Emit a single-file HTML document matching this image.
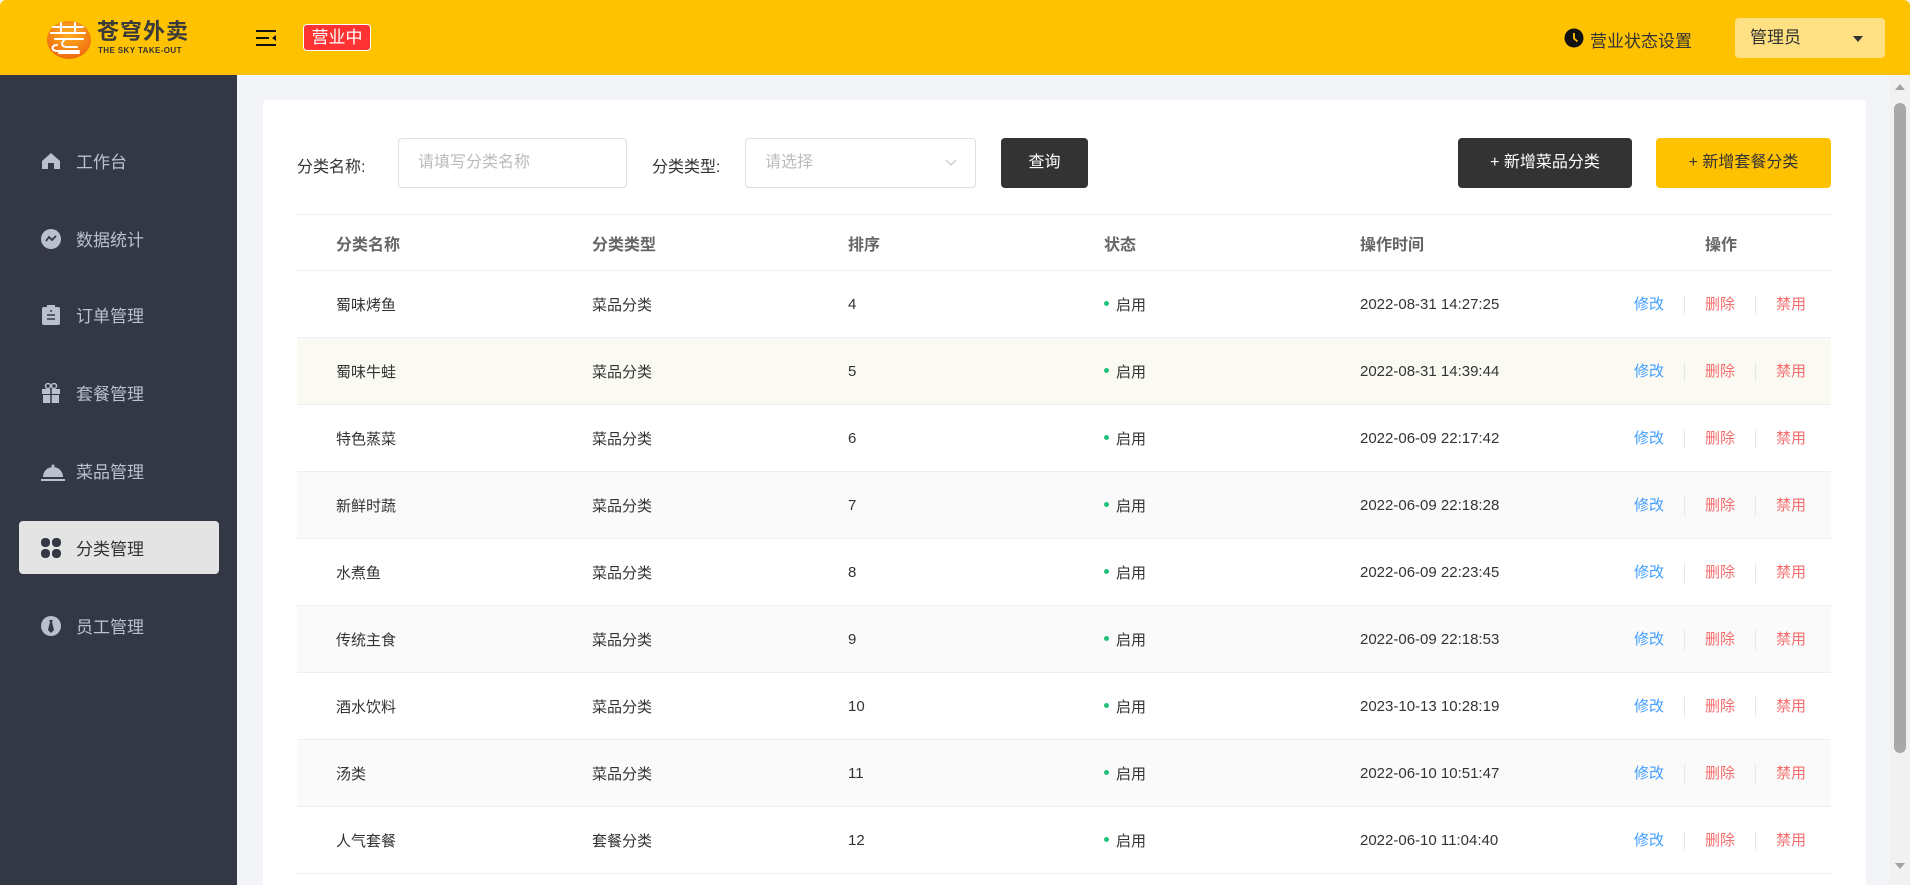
<!DOCTYPE html>
<html><head><meta charset="utf-8">
<style>
*{margin:0;padding:0;box-sizing:border-box}
html,body{width:1910px;height:885px;overflow:hidden}
body{background:#f3f4f7;font-family:"Liberation Sans","Noto Sans CJK SC",sans-serif;color:#333;position:relative}
.hdr{position:absolute;left:0;top:0;width:1910px;height:75px;background:#ffc200;border-radius:6px 6px 0 0}
.side{position:absolute;left:0;top:75px;width:237px;height:810px;background:#343744}
.item{position:absolute;left:19px;width:200px;height:53px;color:#bac0cd;font-size:17px;display:flex;align-items:center;padding-left:57px;border-radius:4px}
.item svg{position:absolute;left:22px;top:17px}
.item.act{background:#e4e4e4;color:#333}
.card{position:absolute;left:263px;top:100px;width:1603px;height:785px;background:#fff;border-radius:4px 4px 0 0}
.lbl{position:absolute;font-size:16px;color:#333}
.inp{position:absolute;top:138px;height:50px;border:1px solid #dcdfe6;border-radius:4px;background:#fff;font-size:16px;color:#bbb;padding-left:19px;line-height:48px}
.btn{position:absolute;top:138px;height:50px;border-radius:4px;font-size:16px;text-align:center;line-height:50px}
.tw{position:absolute;left:297px;top:214px;width:1534px;height:671px;overflow:hidden}
table{width:1534px;border-collapse:collapse;table-layout:fixed;font-size:15px}
td,th{text-align:left;padding-left:39px;border-bottom:1px solid #ebeef5;white-space:nowrap}
th{height:56px;font-weight:bold;color:#666;font-size:16px;border-top:1px solid #ebeef5}
td{height:67px;color:#333}
tr.s td{background:#fafafa}
tr.h td{background:#fafaf3}
.dot{display:inline-block;width:5px;height:5px;border-radius:50%;background:#22c07a;margin-right:7px;vertical-align:middle;position:relative;top:-2px}
.ops{padding-left:57px}
.ops span{display:inline-block}
.b{color:#419eff}.r{color:#f56c6c}
.sep{width:1px;height:20px;background:#e6e6e6;margin:0 20px;vertical-align:middle}
</style></head><body>
<div class="hdr">
  <svg style="position:absolute;left:45px;top:19px" width="47" height="40" viewBox="0 0 47 40">
    <defs><radialGradient id="g" cx="50%" cy="35%" r="65%"><stop offset="0" stop-color="#ffb020"/><stop offset="1" stop-color="#ee6a10"/></radialGradient></defs>
    <ellipse cx="24" cy="21" rx="22" ry="19" fill="url(#g)"/>
    <path d="M8 8h30M16 4v8M30 4v8M6 14h34M10 20h28M12 26c-6 0-6 6 0 6h22M14 34h20M20 20c-4 4-4 8 2 8h10" stroke="#fff" stroke-width="2" fill="none" stroke-linecap="round"/>
  </svg>
  <div style="position:absolute;left:97px;top:20px;font-size:22px;line-height:24px;font-weight:bold;color:#3a3a3a;letter-spacing:1px">苍穹外卖</div>
  <div style="position:absolute;left:98px;top:46px;font-size:8px;line-height:9px;font-weight:bold;color:#333;letter-spacing:.4px">THE SKY TAKE-OUT</div>
  <svg style="position:absolute;left:256px;top:30px" width="20" height="16" viewBox="0 0 20 16"><path d="M0 1h20M0 8h13M0 15h20" stroke="#111" stroke-width="2"/><path d="M20 5l-4 3 4 3z" fill="#111"/></svg>
  <div style="position:absolute;left:303px;top:24px;width:68px;height:27px;background:#fd3333;border:1px solid #fff;border-radius:4px;color:#fff;font-size:17px;text-align:center;line-height:25px">营业中</div>
  <svg style="position:absolute;left:1564px;top:28px" width="20" height="20" viewBox="0 0 20 20"><circle cx="10" cy="10" r="9.5" fill="#111"/><path d="M10 5v5.5l3.5 3" stroke="#ffc200" stroke-width="1.8" fill="none"/></svg>
  <div style="position:absolute;left:1590px;top:27px;font-size:17px;color:#333">营业状态设置</div>
  <div style="position:absolute;left:1735px;top:18px;width:150px;height:40px;background:#ffe083;border-radius:4px;font-size:17px;color:#333;padding-left:15px;line-height:40px">管理员<span style="position:absolute;right:22px;top:18px;border:5px solid transparent;border-top:6px solid #333;border-bottom:0"></span></div>
</div>
<div class="side">
  <div class="item" style="top:59px"><svg width="20" height="20" viewBox="0 0 20 20"><path d="M10 2L1 10v8h6v-6h6v6h6v-8z" fill="#bac0cd"/></svg>工作台</div>
  <div class="item" style="top:137px"><svg width="20" height="20" viewBox="0 0 20 20"><circle cx="10" cy="10" r="10" fill="#bac0cd"/><path d="M5 12l3-4 3 3 4-4" stroke="#343744" stroke-width="1.8" fill="none"/></svg>数据统计</div>
  <div class="item" style="top:213px"><svg width="20" height="20" viewBox="0 0 20 20"><rect x="1" y="2" width="18" height="18" rx="2" fill="#bac0cd"/><rect x="6" y="0" width="8" height="4" fill="#bac0cd"/><path d="M6 10h8M6 14h8M9 6h2" stroke="#343744" stroke-width="1.6"/></svg>订单管理</div>
  <div class="item" style="top:291px"><svg width="20" height="20" viewBox="0 0 20 20"><rect x="1" y="6" width="18" height="5" fill="#bac0cd"/><rect x="2" y="12" width="16" height="8" fill="#bac0cd"/><path d="M10 6v14" stroke="#343744" stroke-width="1.5"/><circle cx="7" cy="3" r="2.5" stroke="#bac0cd" fill="none" stroke-width="1.5"/><circle cx="13" cy="3" r="2.5" stroke="#bac0cd" fill="none" stroke-width="1.5"/></svg>套餐管理</div>
  <div class="item" style="top:369px"><svg width="24" height="20" viewBox="0 0 24 20"><path d="M2 16a10 10 0 0 1 20 0z" fill="#bac0cd"/><path d="M0 19h24" stroke="#bac0cd" stroke-width="2"/><circle cx="12" cy="5" r="1.5" fill="#bac0cd"/></svg>菜品管理</div>
  <div class="item act" style="top:446px"><svg width="20" height="20" viewBox="0 0 20 20" fill="#343744"><rect x="0" y="0" width="9" height="9" rx="4"/><rect x="11" y="0" width="9" height="9" rx="4"/><rect x="0" y="11" width="9" height="9" rx="4"/><rect x="11" y="11" width="9" height="9" rx="4"/></svg>分类管理</div>
  <div class="item" style="top:524px"><svg width="20" height="20" viewBox="0 0 20 20"><circle cx="10" cy="10" r="10" fill="#bac0cd"/><path d="M8 4h4l-1 2 2 8-3 3-3-3 2-8z" fill="#343744"/></svg>员工管理</div>
</div>
<div class="card"></div>
<div class="lbl" style="left:297px;top:153px">分类名称:</div>
<div class="inp" style="left:398px;width:229px">请填写分类名称</div>
<div class="lbl" style="left:652px;top:153px">分类类型:</div>
<div class="inp" style="left:745px;width:231px">请选择<svg style="position:absolute;right:18px;top:20px" width="12" height="8" viewBox="0 0 12 8"><path d="M1 1l5 5 5-5" stroke="#c0c4cc" fill="none" stroke-width="1.2"/></svg></div>
<div class="btn" style="left:1001px;width:87px;background:#333;color:#fff">查询</div>
<div class="btn" style="left:1458px;width:174px;background:#333;color:#fff">+ 新增菜品分类</div>
<div class="btn" style="left:1656px;width:175px;background:#ffc200;color:#333">+ 新增套餐分类</div>
<div class="tw"><table>
<colgroup><col style="width:256px"><col style="width:256px"><col style="width:256px"><col style="width:256px"><col style="width:256px"><col style="width:254px"></colgroup>
<tr><th>分类名称</th><th>分类类型</th><th>排序</th><th>状态</th><th>操作时间</th><th style="padding-left:128px">操作</th></tr>
<tr><td>蜀味烤鱼</td><td>菜品分类</td><td>4</td><td><span class="dot"></span>启用</td><td>2022-08-31 14:27:25</td><td class="ops"><span class="b">修改</span><span class="sep"></span><span class="r">删除</span><span class="sep"></span><span class="r">禁用</span></td></tr>
<tr class="h"><td>蜀味牛蛙</td><td>菜品分类</td><td>5</td><td><span class="dot"></span>启用</td><td>2022-08-31 14:39:44</td><td class="ops"><span class="b">修改</span><span class="sep"></span><span class="r">删除</span><span class="sep"></span><span class="r">禁用</span></td></tr>
<tr><td>特色蒸菜</td><td>菜品分类</td><td>6</td><td><span class="dot"></span>启用</td><td>2022-06-09 22:17:42</td><td class="ops"><span class="b">修改</span><span class="sep"></span><span class="r">删除</span><span class="sep"></span><span class="r">禁用</span></td></tr>
<tr class="s"><td>新鲜时蔬</td><td>菜品分类</td><td>7</td><td><span class="dot"></span>启用</td><td>2022-06-09 22:18:28</td><td class="ops"><span class="b">修改</span><span class="sep"></span><span class="r">删除</span><span class="sep"></span><span class="r">禁用</span></td></tr>
<tr><td>水煮鱼</td><td>菜品分类</td><td>8</td><td><span class="dot"></span>启用</td><td>2022-06-09 22:23:45</td><td class="ops"><span class="b">修改</span><span class="sep"></span><span class="r">删除</span><span class="sep"></span><span class="r">禁用</span></td></tr>
<tr class="s"><td>传统主食</td><td>菜品分类</td><td>9</td><td><span class="dot"></span>启用</td><td>2022-06-09 22:18:53</td><td class="ops"><span class="b">修改</span><span class="sep"></span><span class="r">删除</span><span class="sep"></span><span class="r">禁用</span></td></tr>
<tr><td>酒水饮料</td><td>菜品分类</td><td>10</td><td><span class="dot"></span>启用</td><td>2023-10-13 10:28:19</td><td class="ops"><span class="b">修改</span><span class="sep"></span><span class="r">删除</span><span class="sep"></span><span class="r">禁用</span></td></tr>
<tr class="s"><td>汤类</td><td>菜品分类</td><td>11</td><td><span class="dot"></span>启用</td><td>2022-06-10 10:51:47</td><td class="ops"><span class="b">修改</span><span class="sep"></span><span class="r">删除</span><span class="sep"></span><span class="r">禁用</span></td></tr>
<tr><td>人气套餐</td><td>套餐分类</td><td>12</td><td><span class="dot"></span>启用</td><td>2022-06-10 11:04:40</td><td class="ops"><span class="b">修改</span><span class="sep"></span><span class="r">删除</span><span class="sep"></span><span class="r">禁用</span></td></tr>
</table></div>
<div style="position:absolute;left:1890px;top:75px;width:20px;height:810px;background:#f1f1f1"></div>
<div style="position:absolute;left:1895px;top:84px;border:5px solid transparent;border-bottom:6px solid #a3a3a3;border-top:0"></div>
<div style="position:absolute;left:1894px;top:103px;width:12px;height:650px;background:#a8a8a8;border-radius:6px"></div>
<div style="position:absolute;left:1895px;top:863px;border:5px solid transparent;border-top:6px solid #a3a3a3;border-bottom:0"></div>
</body></html>
